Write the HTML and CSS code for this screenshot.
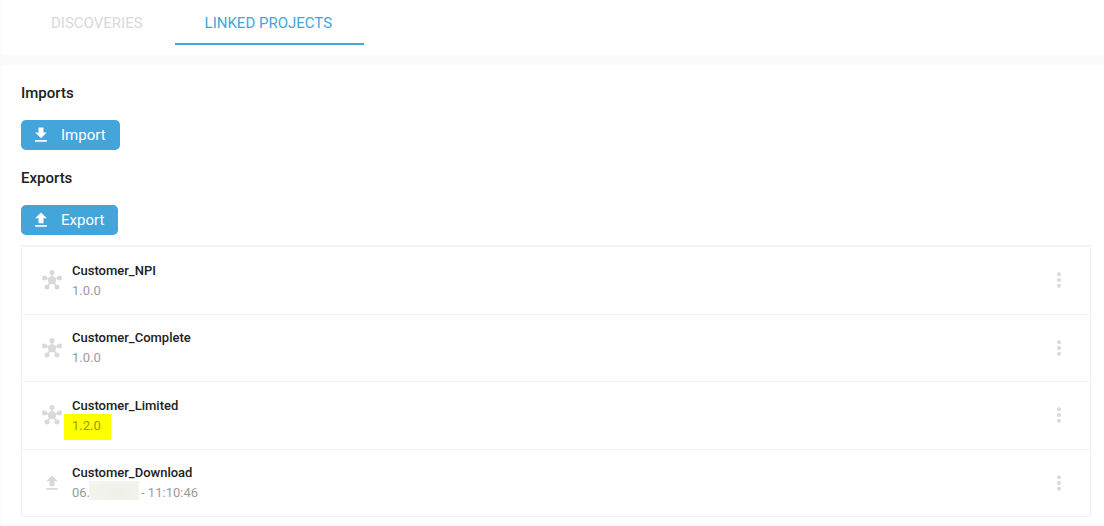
FILE: index.html
```html
<!DOCTYPE html>
<html lang="en">
<head>
<meta charset="utf-8">
<title>Linked projects</title>
<link rel="stylesheet" href="styles.css">
</head>
<body>
<svg class="sprite" aria-hidden="true">
  <symbol id="hub" viewBox="0 0 20 20">
    <path d="M10 10V2.5M10 10L2.5 7.7M10 10l7.5-2.3M10 10l-5 7M10 10l5 7" stroke="currentColor" stroke-width="1.6"/>
    <g fill="currentColor"><circle cx="10" cy="10.3" r="4"/><circle cx="10" cy="2.5" r="2.5"/><circle cx="2.5" cy="7.9" r="2.5"/><circle cx="17.5" cy="7.9" r="2.5"/><circle cx="5" cy="17" r="2.5"/><circle cx="15" cy="17" r="2.5"/></g>
  </symbol>
  <symbol id="download" viewBox="0 0 24 24"><path fill="currentColor" d="M19 9h-4V3H9v6H5l7 7 7-7zM5 18v2h14v-2H5z"/></symbol>
  <symbol id="upload" viewBox="0 0 24 24"><path fill="currentColor" d="M9 16h6v-6h4l-7-7-7 7h4v6zm-4 2h14v2H5v-2z"/></symbol>
  <symbol id="more" viewBox="0 0 20 20"><g fill="currentColor"><circle cx="10" cy="4.3" r="2"/><circle cx="10" cy="10" r="2"/><circle cx="10" cy="15.7" r="2"/></g></symbol>
</svg>
<nav class="tabs">
  <a class="tab" href="#discoveries">DISCOVERIES</a>
  <a class="tab tab-active" href="#linked" aria-current="page">LINKED PROJECTS</a>
</nav>
<main class="panel">
  <h2 class="heading">Imports</h2>
  <button class="action" type="button"><svg class="action-icon"><use href="#download"/></svg>Import</button>
  <h2 class="heading">Exports</h2>
  <button class="action" type="button"><svg class="action-icon"><use href="#upload"/></svg>Export</button>
  <ul class="projects">
    <li class="project">
      <svg class="project-icon"><use href="#hub"/></svg>
      <div class="project-text"><div class="name">Customer_NPI</div><div class="detail">1.0.0</div></div>
      <button class="menu" type="button" aria-label="More actions"><svg class="menu-icon"><use href="#more"/></svg></button>
    </li>
    <li class="project">
      <svg class="project-icon"><use href="#hub"/></svg>
      <div class="project-text"><div class="name">Customer_Complete</div><div class="detail">1.0.0</div></div>
      <button class="menu" type="button" aria-label="More actions"><svg class="menu-icon"><use href="#more"/></svg></button>
    </li>
    <li class="project">
      <svg class="project-icon"><use href="#hub"/></svg>
      <div class="project-text"><div class="name">Customer_Limited</div><div class="detail"><span class="marked">1.2.0</span></div></div>
      <button class="menu" type="button" aria-label="More actions"><svg class="menu-icon"><use href="#more"/></svg></button>
    </li>
    <li class="project">
      <svg class="project-icon"><use href="#upload"/></svg>
      <div class="project-text"><div class="name">Customer_Download</div><div class="detail detail-date">06.<span class="redacted"></span>- 11:10:46</div></div>
      <button class="menu" type="button" aria-label="More actions"><svg class="menu-icon"><use href="#more"/></svg></button>
    </li>
  </ul>
</main>
</body>
</html>
```
FILE: styles.css
```css
* { box-sizing: border-box; }
body {
  margin: 0;
  border-left: 1px solid #fafafa;
  background: #fff;
  color: #212121;
  font-family: Roboto, sans-serif;
}
.sprite { display: none; }
.tabs {
  display: flex;
  padding: 0 20px 10px;
  border-bottom: 10px solid #fafafa;
}
.tab {
  padding: 13px 32px 10px 30px;
  border-bottom: 2px solid transparent;
  color: #d9d9d9;
  font-size: 15px;
  line-height: 20px;
  text-decoration: none;
}
.tab-active {
  border-color: #43a5da;
  color: #43a5da;
}
.panel { padding: 18px 13px 9px 20px; }
.heading {
  margin: 0 0 17px;
  font-size: 15px;
  font-weight: 500;
  line-height: 20px;
}
.action {
  display: flex;
  align-items: center;
  gap: 8px;
  height: 30px;
  margin: 0 0 18px;
  padding: 0 14px 0 8px;
  border: 0;
  border-radius: 5px;
  background: #43a5da;
  color: #fff;
  font: 400 15px/20px Roboto, sans-serif;
}
.action-icon { width: 24px; height: 20px; }
.projects {
  margin: -8px 0 0;
  padding: 0;
  border: 1px solid #f2f2f2;
  border-width: 2px 1px 0;
  list-style: none;
}
.project {
  display: flex;
  align-items: center;
  gap: 10px;
  padding: 13px 21px 13px 20px;
  border-bottom: 1px solid #f2f2f2;
}
.project-icon { width: 20px; height: 20px; color: #d9d9d9; }
.project-text {
  flex: 1;
  font-size: 13px;
  line-height: 20px;
}
.project:nth-child(odd) .project-text { padding-top: 1px; }
.project:nth-child(odd) .menu,
.project:nth-child(odd) .project-icon { margin-bottom: 1px; }
.name { font-weight: 500; }
.detail { color: #9b9b9b; }
.marked {
  margin: 0 -10px 0 -8px;
  padding: 4px 10px 7px 8px;
  background: #ff0;
  color: #9b9b00;
}
.detail-date { display: flex; }
.redacted {
  width: 50px;
  height: 19px;
  margin: -2px 2px 0 -1px;
  background: radial-gradient(ellipse at 60% 60%, #efefe6, #f6f6f3);
}
.menu {
  width: 20px;
  height: 20px;
  padding: 0;
  border: 0;
  background: none;
  color: #d9d9d9;
}
.menu-icon { display: block; width: 20px; height: 20px; }
```
